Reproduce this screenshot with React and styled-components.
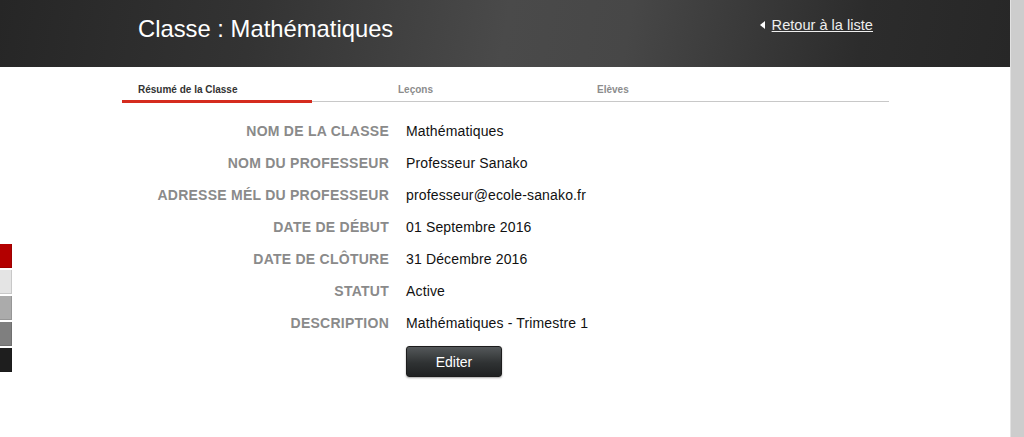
import React from "react";
import styled, { createGlobalStyle } from "styled-components";

const Global = createGlobalStyle`
  html, body {
    margin: 0;
    padding: 0;
    background: #fff;
    font-family: "Liberation Sans", Arial, sans-serif;
  }
`;

const Page = styled.div`
  display: flex;
  width: 1024px;
  height: 437px;
  overflow: hidden;
  position: relative;
`;

const Main = styled.div`
  flex: 1;
  display: flex;
  flex-direction: column;
`;

const ScrollBar = styled.div`
  width: 13px;
  border-left: 1px solid #e2e2e2;
  background: #cdcdcd;
`;

const Header = styled.header`
  height: 67px;
  display: flex;
  align-items: flex-start;
  justify-content: space-between;
  padding: 0 137px 0 138px;
  background: linear-gradient(
    100deg,
    #262626 0%,
    #333 25%,
    #4a4a4a 50%,
    #474747 62%,
    #2c2c2c 85%,
    #272727 100%
  );
`;

const Title = styled.h1`
  margin: 15px 0 0;
  font-size: 23.8px;
  font-weight: normal;
  color: #fff;
`;

const BackLink = styled.a`
  margin-top: 17px;
  display: flex;
  align-items: center;
  gap: 7px;
  font-size: 14.6px;
  color: #eee;
  text-decoration: none;
  span {
    text-decoration: underline;
  }
  &::before {
    content: "";
    border-style: solid;
    border-width: 4px 5px 4px 0;
    border-color: transparent #fff transparent transparent;
  }
`;

const Content = styled.div`
  width: 767px;
  margin-left: 122px;
`;

const Tabs = styled.nav`
  display: flex;
  padding-top: 17px;
  border-bottom: 1px solid #c8c8c8;
`;

const Tab = styled.div`
  width: ${(p) => p.$w}px;
  display: flex;
  flex-direction: column;
`;

const TabLabel = styled.div`
  padding-left: 16px;
  font-size: 10px;
  font-weight: bold;
  color: ${(p) => (p.$active ? "#333" : "#8c8c8c")};
  height: 16px;
`;

const ActiveBar = styled.div`
  width: 190px;
  height: 3px;
  margin-bottom: -2px;
  background: #d52b1e;
`;

const Form = styled.dl`
  display: grid;
  grid-template-columns: 267px auto;
  column-gap: 17px;
  margin: 13px 0 0;
  grid-auto-rows: 32px;
`;

const Label = styled.dt`
  text-align: right;
  font-size: 14px;
  font-weight: bold;
  letter-spacing: 0.25px;
  color: #8a8a8a;
  line-height: 32px;
`;

const Value = styled.dd`
  margin: 0;
  font-size: 14px;
  letter-spacing: 0.15px;
  color: #111;
  line-height: 32px;
`;

const Button = styled.button`
  grid-column: 2;
  margin-top: 7px;
  width: 96px;
  height: 31px;
  border: 1px solid #1c1c1c;
  border-radius: 3px;
  background: linear-gradient(#54585a, #2f3233 55%, #1f2122);
  box-shadow: 0 1px 2px rgba(0, 0, 0, 0.35);
  color: #fff;
  font-family: "Liberation Sans", Arial, sans-serif;
  font-size: 14px;
  cursor: pointer;
`;

const Swatches = styled.div`
  position: absolute;
  left: 0;
  top: 244px;
  display: flex;
  flex-direction: column;
  gap: 2px;
`;

const Swatch = styled.div`
  width: 12px;
  height: 24px;
  background: ${(p) => p.$c};
  border-right: 1px solid rgba(0, 0, 0, 0.12);
  border-bottom: 1px solid rgba(0, 0, 0, 0.12);
  box-sizing: border-box;
`;

const fields = [
  ["NOM DE LA CLASSE", "Mathématiques"],
  ["NOM DU PROFESSEUR", "Professeur Sanako"],
  ["ADRESSE MÉL DU PROFESSEUR", "professeur@ecole-sanako.fr"],
  ["DATE DE DÉBUT", "01 Septembre 2016"],
  ["DATE DE CLÔTURE", "31 Décembre 2016"],
  ["STATUT", "Active"],
  ["DESCRIPTION", "Mathématiques - Trimestre 1"],
];

const swatches = ["#b30000", "#e4e4e4", "#ababab", "#7f7f7f", "#1e1e1e"];

export default function App() {
  return (
    <Page>
      <Global />
      <Main>
        <Header>
          <Title>Classe : Mathématiques</Title>
          <BackLink href="#">
            <span>Retour à la liste</span>
          </BackLink>
        </Header>
        <Content>
          <Tabs>
            <Tab $w={260}>
              <TabLabel $active>Résumé de la Classe</TabLabel>
              <ActiveBar />
            </Tab>
            <Tab $w={199}>
              <TabLabel>Leçons</TabLabel>
            </Tab>
            <Tab $w={200}>
              <TabLabel>Elèves</TabLabel>
            </Tab>
          </Tabs>
          <Form>
            {fields.map(([k, v]) => (
              <React.Fragment key={k}>
                <Label>{k}</Label>
                <Value>{v}</Value>
              </React.Fragment>
            ))}
            <Button>Editer</Button>
          </Form>
        </Content>
      </Main>
      <ScrollBar />
      <Swatches>
        {swatches.map((c) => (
          <Swatch key={c} $c={c} />
        ))}
      </Swatches>
    </Page>
  );
}
